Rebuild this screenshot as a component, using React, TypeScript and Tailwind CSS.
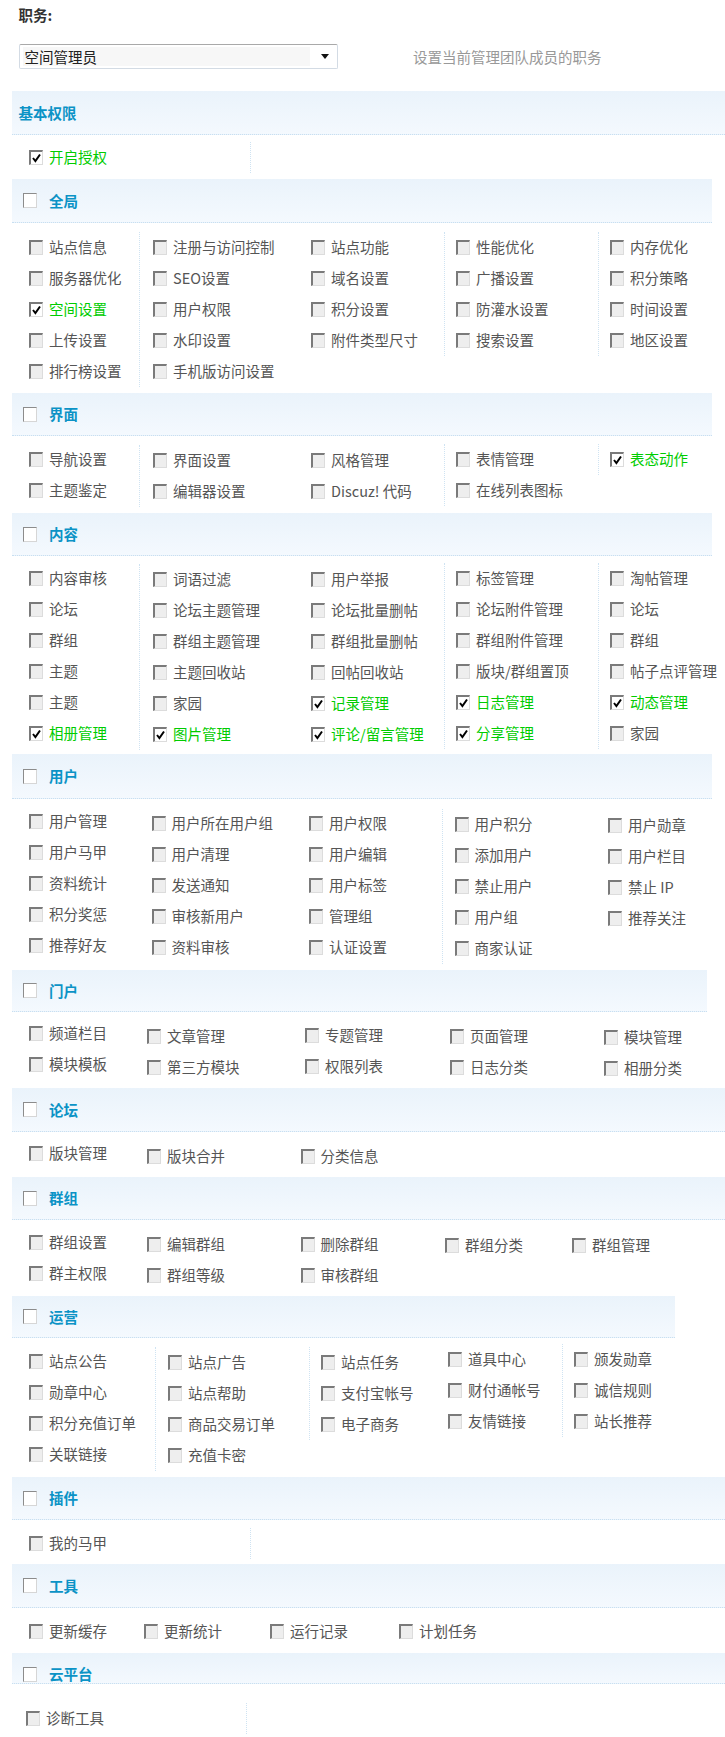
import React from "react";

// "+" in front of a label = checked item
type Col = { cls: string; items: string[] };
type Section = {
  title: string;
  box: boolean;
  headCls: string;
  bodyCls: string;
  cols: Col[];
};

const dot = "border-l border-dotted border-[#cfe3f2]";

const SECTIONS: Section[] = [
  {
    title: "基本权限",
    box: false,
    headCls: "h-[44px] w-[713px] pl-[6.5px] items-center",
    bodyCls: "h-[44px] pt-[6.5px]",
    cols: [
      { cls: "w-[238px] pl-[17px]", items: ["+开启授权"] },
      { cls: "w-[10px] h-[31px] " + dot, items: [] },
    ],
  },
  {
    title: "全局",
    box: true,
    headCls: "h-[44px] w-[700px] pl-[11px] items-center",
    bodyCls: "h-[170px] pt-[8.5px]",
    cols: [
      { cls: "w-[127px] pl-[17px]", items: ["站点信息", "服务器优化", "+空间设置", "上传设置", "排行榜设置"] },
      { cls: "w-[161px] pl-[13px] " + dot, items: ["注册与访问控制", "SEO设置", "用户权限", "水印设置", "手机版访问设置"] },
      { cls: "w-[144px] pl-[11px]", items: ["站点功能", "域名设置", "积分设置", "附件类型尺寸"] },
      { cls: "w-[154px] pl-[11px] " + dot, items: ["性能优化", "广播设置", "防灌水设置", "搜索设置"] },
      { cls: "flex-1 pl-[11px] " + dot, items: ["内存优化", "积分策略", "时间设置", "地区设置"] },
    ],
  },
  {
    title: "界面",
    box: true,
    headCls: "h-[43px] w-[700px] pl-[11px] items-center",
    bodyCls: "h-[77px] pt-[7.5px]",
    cols: [
      { cls: "w-[127px] pl-[17px]", items: ["导航设置", "主题鉴定"] },
      { cls: "w-[161px] pl-[13px] mt-[1px] " + dot, items: ["界面设置", "编辑器设置"] },
      { cls: "w-[144px] pl-[11px] mt-[1px]", items: ["风格管理", "Discuz! 代码"] },
      { cls: "w-[154px] pl-[11px] " + dot, items: ["表情管理", "在线列表图标"] },
      { cls: "flex-1 pl-[11px] " + dot, items: ["+表态动作"] },
    ],
  },
  {
    title: "内容",
    box: true,
    headCls: "h-[43px] w-[700px] pl-[11px] items-center",
    bodyCls: "h-[198px] pt-[6.5px]",
    cols: [
      { cls: "w-[127px] pl-[17px]", items: ["内容审核", "论坛", "群组", "主题", "主题", "+相册管理"] },
      { cls: "w-[161px] pl-[13px] mt-[1px] " + dot, items: ["词语过滤", "论坛主题管理", "群组主题管理", "主题回收站", "家园", "+图片管理"] },
      { cls: "w-[144px] pl-[11px] mt-[1px]", items: ["用户举报", "论坛批量删帖", "群组批量删帖", "回帖回收站", "+记录管理", "+评论/留言管理"] },
      { cls: "w-[154px] pl-[11px] " + dot, items: ["标签管理", "论坛附件管理", "群组附件管理", "版块/群组置顶", "+日志管理", "+分享管理"] },
      { cls: "flex-1 pl-[11px] " + dot, items: ["淘帖管理", "论坛", "群组", "帖子点评管理", "+动态管理", "家园"] },
    ],
  },
  {
    title: "用户",
    box: true,
    headCls: "h-[45px] w-[700px] pl-[11px] items-center",
    bodyCls: "h-[171px] pt-[6.5px]",
    cols: [
      { cls: "w-[127px] pl-[17px]", items: ["用户管理", "用户马甲", "资料统计", "积分奖惩", "推荐好友"] },
      { cls: "w-[159px] pl-[12.5px] mt-[2px]", items: ["用户所在用户组", "用户清理", "发送通知", "审核新用户", "资料审核"] },
      { cls: "w-[144px] pl-[11px] mt-[2px]", items: ["用户权限", "用户编辑", "用户标签", "管理组", "认证设置"] },
      { cls: "w-[154px] pl-[11.5px] mt-[3px] " + dot, items: ["用户积分", "添加用户", "禁止用户", "用户组", "商家认证"] },
      { cls: "flex-1 pl-[12px] mt-[4px]", items: ["用户勋章", "用户栏目", "禁止 IP", "推荐关注"] },
    ],
  },
  {
    title: "门户",
    box: true,
    headCls: "h-[42px] w-[695px] pl-[11px] items-center",
    bodyCls: "h-[76px] pt-[5.5px]",
    cols: [
      { cls: "w-[127px] pl-[17px]", items: ["频道栏目", "模块模板"] },
      { cls: "w-[157px] pl-[8px] mt-[3px]", items: ["文章管理", "第三方模块"] },
      { cls: "w-[144px] pl-[9px] mt-[2px]", items: ["专题管理", "权限列表"] },
      { cls: "w-[154px] pl-[10px] mt-[3px]", items: ["页面管理", "日志分类"] },
      { cls: "flex-1 pl-[10px] mt-[4px]", items: ["模块管理", "相册分类"] },
    ],
  },
  {
    title: "论坛",
    box: true,
    headCls: "h-[44px] w-[713px] pl-[11px] items-center",
    bodyCls: "h-[45px] pt-[5.5px]",
    cols: [
      { cls: "w-[127px] pl-[17px]", items: ["版块管理"] },
      { cls: "w-[153px] pl-[8px] mt-[3px]", items: ["版块合并"] },
      { cls: "flex-1 pl-[8.5px] mt-[3px]", items: ["分类信息"] },
    ],
  },
  {
    title: "群组",
    box: true,
    headCls: "h-[43px] w-[713px] pl-[11px] items-center",
    bodyCls: "h-[76px] pt-[6.5px]",
    cols: [
      { cls: "w-[127px] pl-[17px]", items: ["群组设置", "群主权限"] },
      { cls: "w-[153px] pl-[8px] mt-[2px]", items: ["编辑群组", "群组等级"] },
      { cls: "w-[144px] pl-[8.5px] mt-[2px]", items: ["删除群组", "审核群组"] },
      { cls: "w-[128px] pl-[9px] mt-[3px]", items: ["群组分类"] },
      { cls: "flex-1 pl-[8px] mt-[3px]", items: ["群组管理"] },
    ],
  },
  {
    title: "运营",
    box: true,
    headCls: "h-[42px] w-[663px] pl-[11px] items-center",
    bodyCls: "h-[139px] pt-[7.5px]",
    cols: [
      { cls: "w-[143px] pl-[17px]", items: ["站点公告", "勋章中心", "积分充值订单", "关联链接"] },
      { cls: "w-[154px] pl-[12px] mt-[1px] " + dot, items: ["站点广告", "站点帮助", "商品交易订单", "充值卡密"] },
      { cls: "w-[129px] pl-[11px] mt-[1px] " + dot, items: ["站点任务", "支付宝帐号", "电子商务"] },
      { cls: "w-[124px] pl-[10px] mt-[-2px]", items: ["道具中心", "财付通帐号", "友情链接"] },
      { cls: "flex-1 pl-[11px] mt-[-2px] " + dot, items: ["颁发勋章", "诚信规则", "站长推荐"] },
    ],
  },
  {
    title: "插件",
    box: true,
    headCls: "h-[43px] w-[713px] pl-[11px] items-center",
    bodyCls: "h-[44px] pt-[7.5px]",
    cols: [
      { cls: "w-[238px] pl-[17px]", items: ["我的马甲"] },
      { cls: "w-[10px] h-[31px] " + dot, items: [] },
    ],
  },
  {
    title: "工具",
    box: true,
    headCls: "h-[44px] w-[713px] pl-[11px] items-center",
    bodyCls: "h-[45px] pt-[7.5px]",
    cols: [
      { cls: "w-[120px] pl-[17px]", items: ["更新缓存"] },
      { cls: "w-[126px] pl-[12px]", items: ["更新统计"] },
      { cls: "w-[130px] pl-[12px]", items: ["运行记录"] },
      { cls: "flex-1 pl-[11px]", items: ["计划任务"] },
    ],
  },
  {
    title: "云平台",
    box: true,
    headCls: "h-[31px] w-[713px] pl-[11px] pt-[11px] items-start",
    bodyCls: "h-[60px] pt-[18.5px]",
    cols: [
      { cls: "w-[234px] pl-[14px]", items: ["诊断工具"] },
      { cls: "w-[10px] h-[31px] " + dot, items: [] },
    ],
  },
];

function Box({ checked, head }: { checked?: boolean; head?: boolean }) {
  const base = "relative inline-block w-[14px] h-[15px] shrink-0";
  const look = head
    ? "border border-t-[#8c8c8c] border-l-[#8c8c8c] border-r-[#d6d6d6] border-b-[#d6d6d6] bg-white"
    : checked
      ? "border-t-2 border-l-2 border-r border-b border-t-[#7a7a7a] border-l-[#7a7a7a] border-r-[#dcdcdc] border-b-[#dcdcdc] bg-white"
      : "border-t-2 border-l-2 border-r border-b border-t-[#7a7a7a] border-l-[#7a7a7a] border-r-[#dcdcdc] border-b-[#dcdcdc] bg-[#eeeeee]";
  return (
    <span className={`${base} ${look}`}>
      {checked && (
        <svg viewBox="0 0 11 12" className="absolute left-0 top-0 w-[11px] h-[12px]">
          <path d="M2 6 L4.4 9 L9 2.5" stroke="#000" strokeWidth="2" fill="none" />
        </svg>
      )}
    </span>
  );
}

function Item({ raw }: { raw: string }) {
  const checked = raw.startsWith("+");
  const label = checked ? raw.slice(1) : raw;
  return (
    <div className="flex items-center h-[31px] whitespace-nowrap">
      <Box checked={checked} />
      <span className={`ml-[6px] leading-[20px] ${checked ? "text-[#00cc00]" : "text-[#555555]"}`}>{label}</span>
    </div>
  );
}

export default function App() {
  return (
    <div className="w-[725px] min-h-[1737px] bg-white overflow-hidden font-['Noto_Sans_CJK_SC',sans-serif] text-[14.5px]">
      {/* --- 职务 --- */}
      <div className="pl-[18.5px] pt-[5px] h-[25px] leading-[20px] font-bold text-[#333333]">职务:</div>
      <div className="flex items-center mt-[19px] pl-[18.5px] h-[25px]">
        <div className="flex items-center w-[319px] h-[25px] border border-[#d3dbe4] border-t-[#a9a9a9] rounded-[2px] px-[3px]">
          <div className="flex-1 h-[19px] bg-[#f7f7f7] pl-[2px] leading-[19px] text-[#222222]">空间管理员</div>
          <svg viewBox="0 0 8 5" className="w-[8px] h-[5px] ml-[11px] mr-[5px]">
            <path d="M0 0 H8 L4 5 Z" fill="#111" />
          </svg>
        </div>
        <div className="ml-[75.5px] leading-[20px] text-[#999999]">设置当前管理团队成员的职务</div>
      </div>

      {/* --- permission sections --- */}
      <div className="ml-[12px] mt-[22px]">
        {SECTIONS.map((s) => (
          <div key={s.title}>
            <div className={`flex bg-linear-to-b from-[#eaf3fb] to-[#f4f9fe] border-b border-dotted border-[#c8dff1] ${s.headCls}`}>
              <div className="flex items-center h-[20px]">
                {s.box && <Box head />}
                <span className={`leading-[20px] font-bold text-[#0b93c6] ${s.box ? "ml-[12px]" : ""}`}>{s.title}</span>
              </div>
            </div>
            <div className={`flex items-start ${s.bodyCls}`}>
              {s.cols.map((c, i) => (
                <div key={i} className={c.cls}>
                  {c.items.map((it, j) => (
                    <Item key={j} raw={it} />
                  ))}
                </div>
              ))}
            </div>
          </div>
        ))}
      </div>
    </div>
  );
}
